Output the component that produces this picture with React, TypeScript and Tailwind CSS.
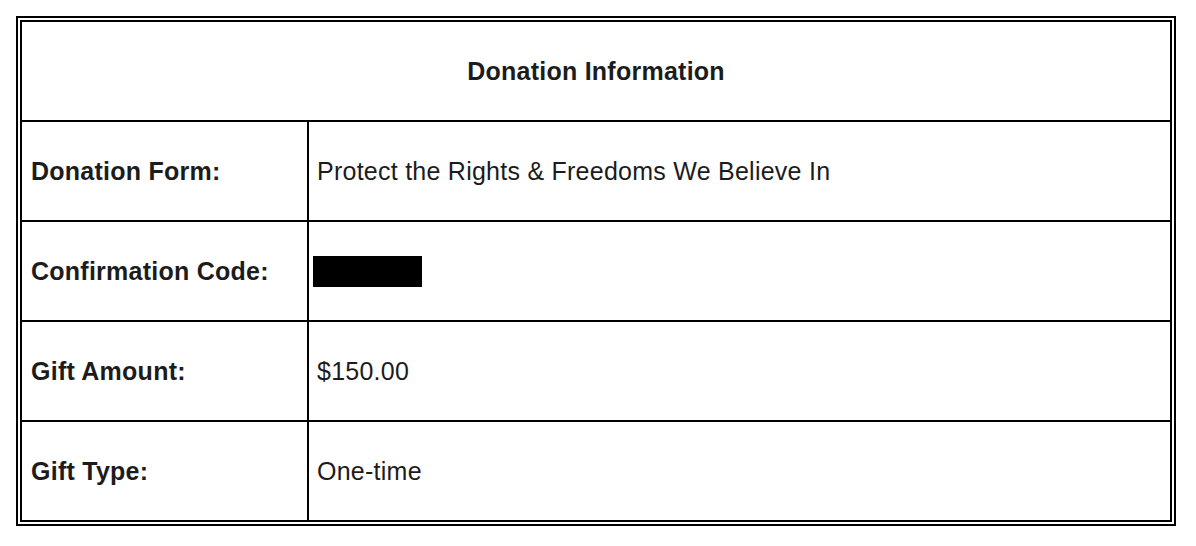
const rows = [
  { label: 'Donation Form:', value: 'Protect the Rights & Freedoms We Believe In' },
  { label: 'Confirmation Code:', value: null },
  { label: 'Gift Amount:', value: '$150.00' },
  { label: 'Gift Type:', value: 'One-time' },
]

export default function App() {
  return (
    <div className="min-h-screen bg-white p-4 font-['Liberation_Sans',Arial,sans-serif] text-[25px] tracking-[0.25px] text-[#1c1c1c]">
      <div className="w-[1160px] border-2 border-black p-[2px]">
        <div className="border-2 border-black">
          <div className="flex h-[98px] items-center justify-center pt-[2px] font-bold">Donation Information</div>
          {rows.map((row) => (
            <div key={row.label} className="grid h-[100px] grid-cols-[285px_1fr] border-t-2 border-black">
              <div className="flex items-center pl-[9px] pt-[2px] font-bold">{row.label}</div>
              <div className="flex items-center border-l-2 border-black pl-[8px] pt-[2px]">
                {row.value ?? <span className="-mt-[2px] -ml-1 block h-[31px] w-[109px] bg-black" />}
              </div>
            </div>
          ))}
        </div>
      </div>
    </div>
  )
}
